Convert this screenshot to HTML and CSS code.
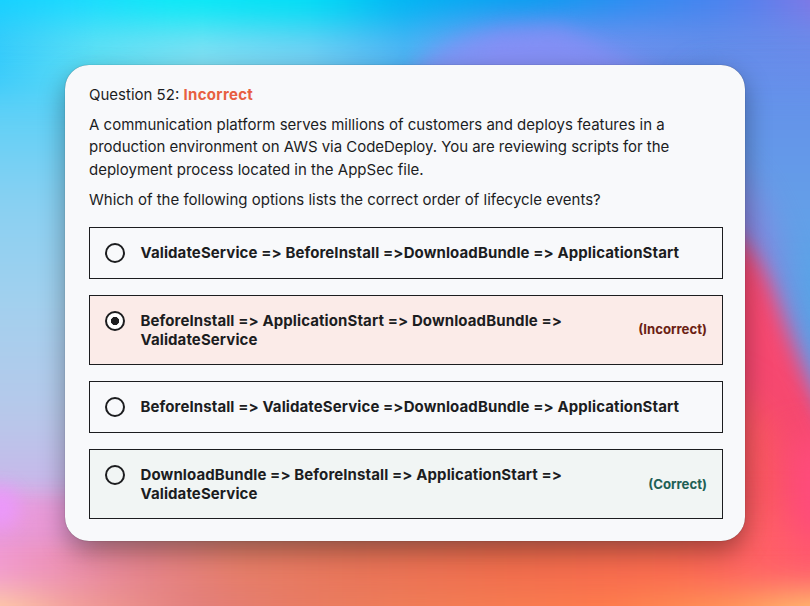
FILE: index.html
```html
<!DOCTYPE html>
<html lang="en">
<head>
<meta charset="utf-8">
<title>Question 52</title>
<link rel="stylesheet" href="styles.css">
</head>
<body>
<svg class="backdrop" viewBox="0 0 810 606" preserveAspectRatio="none" aria-hidden="true">
  <defs>
    <linearGradient id="top" x1="0" x2="1" y1="0" y2="0">
      <stop offset="0" stop-color="#10ccff"/><stop offset=".14" stop-color="#18daff"/><stop offset=".25" stop-color="#08eaf6"/><stop offset=".4" stop-color="#00dcf5"/><stop offset=".5" stop-color="#00b4f3"/><stop offset=".63" stop-color="#00a0f0"/><stop offset=".75" stop-color="#2a8cf2"/><stop offset=".87" stop-color="#5080ee"/><stop offset="1" stop-color="#a070e0"/>
    </linearGradient>
    <linearGradient id="upper" x1="0" x2="1" y1="0" y2="0">
      <stop offset="0" stop-color="#38ccfb"/><stop offset=".12" stop-color="#60e0f5"/><stop offset=".25" stop-color="#80e0f4"/><stop offset=".38" stop-color="#74d0f4"/><stop offset=".5" stop-color="#50b4f4"/><stop offset=".62" stop-color="#7894f4"/><stop offset=".87" stop-color="#648eea"/><stop offset="1" stop-color="#6a8cea"/>
    </linearGradient>
    <linearGradient id="left" x1="0" x2="0" y1="0" y2="1">
      <stop offset="0" stop-color="#54d0f8"/><stop offset=".25" stop-color="#88d0f2"/><stop offset=".5" stop-color="#a4d0ee"/><stop offset=".75" stop-color="#b8c8ea"/><stop offset=".9" stop-color="#c8b8ea"/><stop offset="1" stop-color="#d8a8f0"/>
    </linearGradient>
    <linearGradient id="right" x1="0" x2="0" y1="0" y2="1">
      <stop offset="0" stop-color="#6490ea"/><stop offset=".4" stop-color="#64a0e8"/><stop offset=".7" stop-color="#50a8e6"/><stop offset="1" stop-color="#48a8e0"/>
    </linearGradient>
    <linearGradient id="lower" x1="0" x2="1" y1="0" y2="0">
      <stop offset="0" stop-color="#f4a0e4"/><stop offset=".1" stop-color="#ee94c0"/><stop offset=".2" stop-color="#e48490"/><stop offset=".32" stop-color="#e67e68"/><stop offset=".45" stop-color="#e87458"/><stop offset=".62" stop-color="#f06c4c"/><stop offset=".8" stop-color="#fa6850"/><stop offset=".9" stop-color="#ff6068"/><stop offset="1" stop-color="#ff5472"/>
    </linearGradient>
    <linearGradient id="bottom" x1="0" x2="1" y1="0" y2="0">
      <stop offset="0" stop-color="#ffd8a0"/><stop offset=".06" stop-color="#ffd0a0"/><stop offset=".13" stop-color="#f4a498"/><stop offset=".27" stop-color="#e27e7c"/><stop offset=".38" stop-color="#e87c64"/><stop offset=".5" stop-color="#f07e58"/><stop offset=".72" stop-color="#ff7e4c"/><stop offset=".86" stop-color="#ff9c58"/><stop offset=".94" stop-color="#ffc46c"/><stop offset="1" stop-color="#ffcc70"/>
    </linearGradient>
    <filter id="b8" filterUnits="userSpaceOnUse" x="-150" y="-150" width="1110" height="906" color-interpolation-filters="sRGB"><feGaussianBlur stdDeviation="10"/></filter>
    <filter id="b18" filterUnits="userSpaceOnUse" x="-150" y="-150" width="1110" height="906" color-interpolation-filters="sRGB"><feGaussianBlur stdDeviation="18"/></filter>
  </defs>
  <rect width="810" height="606" fill="url(#upper)"/>
  <path d="M-50 -80H860V20H560Q470 16 400 26Q200 30 -50 16Z" fill="url(#top)" filter="url(#b18)"/>
  <path d="M384 150Q400 70 440 50T560 26L750 120V210H384Z" fill="#8c8ef6" filter="url(#b8)" opacity=".7"/>
  <rect x="-60" y="90" width="180" height="440" fill="url(#left)" filter="url(#b18)"/>
  <rect x="700" y="80" width="180" height="350" fill="url(#right)" filter="url(#b18)"/>
  <path d="M690 150Q750 160 775 250T840 420V650H690Z" fill="#9080dc" filter="url(#b18)" opacity=".9"/>
  <path d="M700 220Q750 226 776 300T835 440V660H700Z" fill="#f64870" filter="url(#b8)"/>
  <path d="M690 380Q770 390 790 470T850 600V650H690Z" fill="#fa5860" filter="url(#b18)"/>
  <rect x="-50" y="515" width="910" height="150" fill="url(#lower)" filter="url(#b18)"/>
  <rect x="-50" y="592" width="910" height="90" fill="url(#bottom)" filter="url(#b18)"/>
  <rect x="-80" y="496" width="170" height="46" fill="#f096d8" filter="url(#b8)" opacity=".75"/>
  <ellipse cx="0" cy="508" rx="20" ry="22" fill="#ec98ff" filter="url(#b8)" opacity=".9"/>
  <rect x="790" y="440" width="90" height="95" fill="#ff4c7c" filter="url(#b18)"/>
</svg>
<main class="card">
  <h1 class="title">Question 52: <b>Incorrect</b></h1>
  <p class="prompt"><span class="l1">A communication platform serves millions of customers and deploys features in a</span><br><span class="l2">production environment on AWS via CodeDeploy. You are reviewing scripts for the</span><br><span class="l3">deployment process located in the AppSec file.</span></p>
  <p class="prompt ask">Which of the following options lists the correct order of lifecycle events?</p>
  <ul class="options">
    <li class="option"><i class="radio"></i><span class="answer">ValidateService =&gt; BeforeInstall =&gt;DownloadBundle =&gt; ApplicationStart</span></li>
    <li class="option wrong"><i class="radio checked"></i><span class="answer">BeforeInstall =&gt; ApplicationStart =&gt; DownloadBundle =&gt;<br>ValidateService</span><span class="verdict">(Incorrect)</span></li>
    <li class="option"><i class="radio"></i><span class="answer">BeforeInstall =&gt; ValidateService =&gt;DownloadBundle =&gt; ApplicationStart</span></li>
    <li class="option right"><i class="radio"></i><span class="answer">DownloadBundle =&gt; BeforeInstall =&gt; ApplicationStart =&gt;<br>ValidateService</span><span class="verdict">(Correct)</span></li>
  </ul>
</main>
</body>
</html>
```
FILE: styles.css
```css
* { box-sizing: border-box; }
body {
  margin: 0;
  width: 810px;
  height: 606px;
  padding: 65px;
  overflow: hidden;
  font-family: Inter, "Liberation Sans", sans-serif;
  color: #1c1d1f;
}
.backdrop {
  position: absolute;
  inset: 0;
  width: 810px;
  height: 606px;
  z-index: -1;
}
.card {
  width: 680px;
  height: 476px;
  padding: 19px 22px 22px 24px;
  border-radius: 24px;
  background: #f8f9fb;
  box-shadow: 0 0 1px rgba(0, 0, 0, .5), 0 10px 26px rgba(0, 0, 0, .36);
}
.title, .prompt {
  margin: 0;
  font-size: 15px;
  font-weight: 400;
  line-height: 22.4px;
  white-space: nowrap;
}
.title b { font-weight: 700; letter-spacing: .33px; color: #e75f42; }
.prompt { margin-top: 7.6px; }
.l2 { letter-spacing: -.03px; }
.options {
  display: flex;
  flex-direction: column;
  gap: 16px;
  margin: 16px 0 0;
  padding: 0;
  list-style: none;
}
.option {
  display: flex;
  align-items: flex-start;
  min-height: 52px;
  padding: 15px;
  border: 1px solid #1c1d1f;
}
.wrong { background: #fbebe8; }
.right { background: #f1f5f4; }
.wrong, .right { height: 70px; }
.radio {
  flex: none;
  width: 20px;
  height: 20px;
  margin-right: 15.5px;
  border: 2px solid #1c1d1f;
  border-radius: 50%;
}
.checked { background: radial-gradient(circle, #1c1d1f 3.8px, #fff 4.4px); }
.answer {
  font-size: 15px;
  font-weight: 700;
  line-height: 19.2px;
  letter-spacing: .1px;
  font-variant-ligatures: none;
  font-feature-settings: "calt" 0;
  white-space: nowrap;
}
.verdict {
  margin-left: auto;
  align-self: center;
  font-size: 13.2px;
  font-weight: 700;
  line-height: 20px;
}
.wrong .verdict { color: #6b1f14; margin-top: -2px; }
.right .verdict { color: #1e6055; }
```
